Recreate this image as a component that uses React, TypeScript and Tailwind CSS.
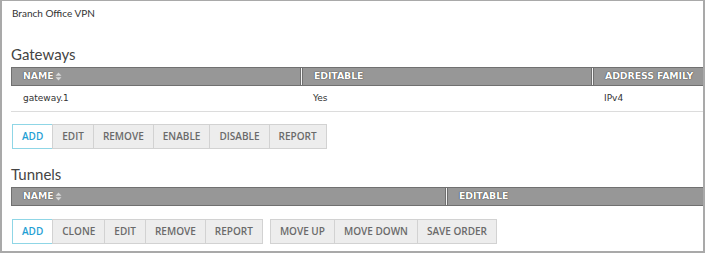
import React from "react";

type Col = { label: string; width?: string; sortable?: boolean };

const GATEWAY_COLS: Col[] = [
  { label: "NAME", width: "w-[289px]", sortable: true },
  { label: "EDITABLE", width: "w-[290px]" },
  { label: "ADDRESS FAMILY" },
];

const TUNNEL_COLS: Col[] = [
  { label: "NAME", width: "w-[434px]", sortable: true },
  { label: "EDITABLE" },
];

function SortIcon() {
  return (
    <svg width="7" height="9" viewBox="0 0 7 9" className="ml-[2px]">
      <path d="M3.5 0.5 L6.5 3.8 L0.5 3.8 Z" fill="#d8d8d8" />
      <path d="M3.5 8.5 L6.5 5.2 L0.5 5.2 Z" fill="#d8d8d8" />
    </svg>
  );
}

function HeaderRow({ cols }: { cols: Col[] }) {
  return (
    <div className="flex h-[19px] bg-[#979797] border-t border-b border-[#707070] border-l">
      {cols.map((c, i) => (
        <div
          key={c.label}
          className={`${c.width ?? "flex-1"} flex items-center pl-[11px] ${
            i < cols.length - 1 ? "border-r border-r-[#6f6f6f] shadow-[1px_0_0_#f4f4f4]" : ""
          } ${i > 0 ? "border-l border-l-[#6f6f6f] ml-[1px]" : ""}`}
        >
          <span className="font-['DejaVu_Sans',Verdana,sans-serif] font-bold text-[9.4px] text-white tracking-[-0.1px] [text-shadow:0_0_1px_#333,0_0_1px_#555]">
            {c.label}
          </span>
          {c.sortable && <SortIcon />}
        </div>
      ))}
    </div>
  );
}

function Btn({ label, primary }: { label: string; primary?: boolean }) {
  return (
    <button
      className={`h-[25px] px-[9px] border font-['Open_Sans',sans-serif] font-semibold text-[10px] ${
        primary
          ? "bg-white border-[#8fd6e6] text-[#1f9fd4]"
          : "bg-[#ededed] border-[#d2d2d2] text-[#6a6a6a] -ml-px"
      }`}
    >
      {label}
    </button>
  );
}

export default function App() {
  return (
    <div className="w-[705px] h-[253px] box-border border-l-2 border-r-2 border-t border-b-2 border-[#a9a9a9] bg-white pl-[9px] overflow-hidden">
      <div className="pt-[5px] h-[36px] pl-[1px] font-['Lato','Open_Sans',sans-serif] text-[10px] text-[#333]">
        Branch Office VPN
      </div>

      <div className="h-[30px] pt-[8px] font-['Lato','Open_Sans',sans-serif] text-[15px] text-[#444] leading-[18px]">
        Gateways
      </div>

      <HeaderRow cols={GATEWAY_COLS} />
      <div className="flex h-[26px] items-center border-b border-[#dcdcdc] font-['DejaVu_Sans',Verdana,sans-serif] text-[9px] text-[#333]">
        <div className="w-[290px] pl-[12px]">gateway.1</div>
        <div className="w-[291px] pl-[12px]">Yes</div>
        <div className="flex-1 pl-[12px]">IPv4</div>
      </div>

      <div className="flex pt-[12px] pl-[1px]">
        <Btn label="ADD" primary />
        <Btn label="EDIT" />
        <Btn label="REMOVE" />
        <Btn label="ENABLE" />
        <Btn label="DISABLE" />
        <Btn label="REPORT" />
      </div>

      <div className="h-[38px] pt-[16px] font-['Lato','Open_Sans',sans-serif] text-[15px] text-[#444] leading-[18px]">
        Tunnels
      </div>

      <HeaderRow cols={TUNNEL_COLS} />

      <div className="flex pt-[13px] pl-[1px]">
        <div className="flex">
          <Btn label="ADD" primary />
          <Btn label="CLONE" />
          <Btn label="EDIT" />
          <Btn label="REMOVE" />
          <Btn label="REPORT" />
        </div>
        <div className="flex ml-[8px]">
          <Btn label="MOVE UP" />
          <Btn label="MOVE DOWN" />
          <Btn label="SAVE ORDER" />
        </div>
      </div>
    </div>
  );
}
